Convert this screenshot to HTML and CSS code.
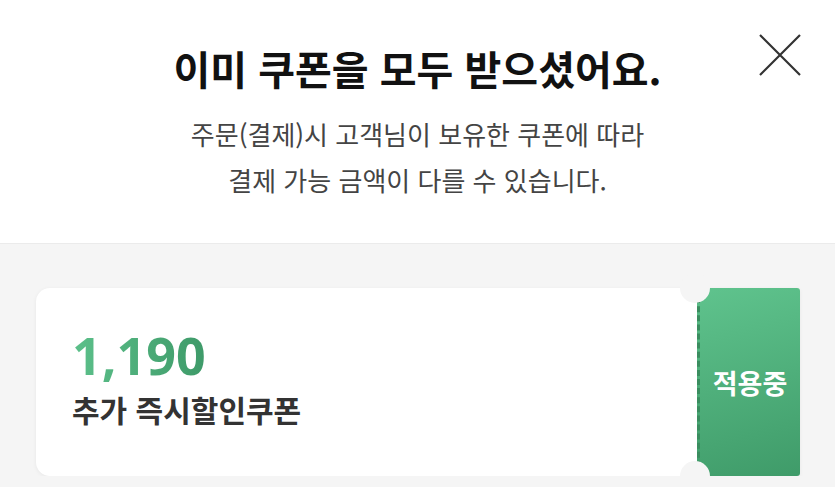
FILE: index.html
```html
<!DOCTYPE html>
<html lang="ko">
    <head>
        <meta charset="utf-8">
        <title>쿠폰 받기</title>
        <link rel="stylesheet" href="styles.css">
    </head>
    <body>
        <div class="sheet-head">
            <h1 class="sheet-title">이미 쿠폰을 모두 받으셨어요.</h1>
            <p class="sheet-desc">주문(결제)시 고객님이 보유한 쿠폰에 따라<br>결제 가능 금액이 다를 수 있습니다.</p>
            <button class="close" type="button" aria-label="닫기">
                <svg width="42" height="42" viewBox="0 0 42 42">
                    <path d="M1 1 L41 41 M41 1 L1 41" stroke="#333" stroke-width="2.2" fill="none"/>
                </svg>
            </button>
        </div>
        <div class="sheet-body">
            <div class="coupon">
                <div class="coupon-info">
                    <div class="coupon-price">1,190</div>
                    <div class="coupon-name">추가 즉시할인쿠폰</div>
                </div>
                <div class="coupon-stub">적용중</div>
            </div>
        </div>
    </body>
</html>
```

FILE: styles.css
```css
body {
    margin: 0;
    font-family: "Noto Sans CJK KR", "Noto Sans", sans-serif;
    background: #f5f5f5;
    color: #222;
}

.sheet-head {
    position: relative;
    background: #fff;
    border-bottom: 1px solid #ebebeb;
    padding: 42px 0 40px;
    text-align: center;
}

.sheet-title {
    margin: 0;
    font-size: 40px;
    line-height: 52px;
    font-weight: 700;
    color: #111;
}

.sheet-desc {
    margin: 17px 0 0;
    font-size: 26px;
    line-height: 46px;
    color: #444;
}

.close {
    position: absolute;
    top: 34px;
    right: 34px;
    padding: 0;
    border: 0;
    background: none;
}

.close svg {
    display: block;
}

.sheet-body {
    padding: 44px 35px 0 36px;
}

.coupon {
    position: relative;
    display: flex;
    height: 188px;
    border-radius: 14px 4px 4px 14px;
    background: #fff;
    box-shadow: 0 1px 4px rgba(0, 0, 0, 0.06);
}

.coupon:before,
.coupon:after {
    content: "";
    position: absolute;
    left: 644px;
    width: 30px;
    height: 30px;
    border-radius: 50%;
    background: #f5f5f5;
    z-index: 2;
}

.coupon:before {
    top: -15px;
}

.coupon:after {
    bottom: -15px;
}

.coupon-info {
    flex: 1;
    display: flex;
    flex-direction: column;
    justify-content: center;
    padding: 0 0 10px 36px;
}

.coupon-price {
    font-family: "Noto Sans", sans-serif;
    font-size: 52px;
    line-height: 58px;
    font-weight: 700;
    background: linear-gradient(90deg, #5cc08a, #3e9a69);
    -webkit-background-clip: text;
    background-clip: text;
    color: transparent;
    width: max-content;
}

.coupon-name {
    margin-top: 6px;
    font-size: 30px;
    line-height: 38px;
    font-weight: 700;
    color: #333;
}

.coupon-stub {
    width: 100px;
    display: flex;
    align-items: center;
    justify-content: center;
    border-left: 3px dashed #3a8d5f;
    border-radius: 0 3px 3px 0;
    background: linear-gradient(165deg, #5fc38d, #3f9b69);
    color: #fff;
    font-size: 27px;
    font-weight: 700;
}
```
